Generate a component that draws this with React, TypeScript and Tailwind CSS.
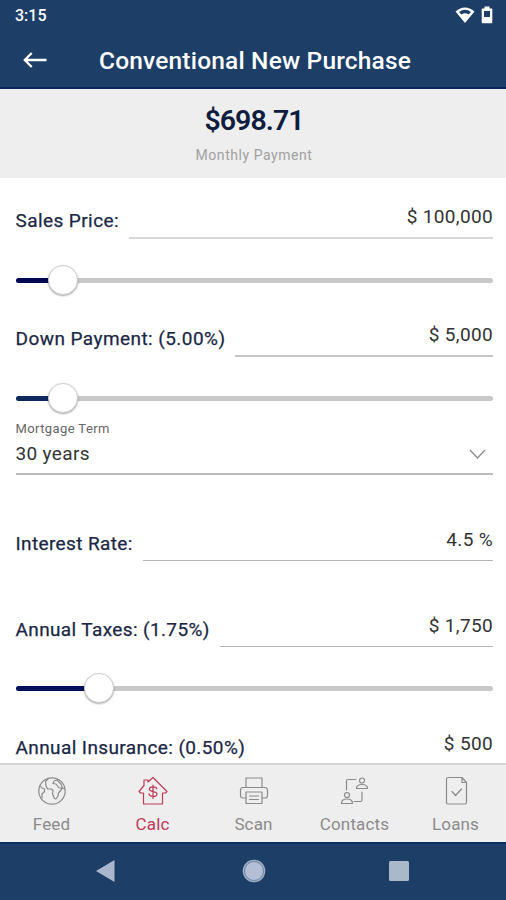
import type { ReactNode } from 'react';

function FieldRow({ label, value, line, spacing }: { label: string; value: string; line: string; spacing: string }) {
  return (
    <div className="flex h-11 items-end gap-[10px]">
      <span className={`shrink-0 text-[19px] leading-6 whitespace-nowrap text-[#1b2745] [-webkit-text-stroke:0.25px_#1b2745] ${spacing}`}>{label}</span>
      <div className={`flex-1 pb-2 text-right text-[19px] leading-6 tracking-[0.35px] text-[#333] ${line}`}>{value}</div>
    </div>
  );
}

function Slider({ fill, knob, color }: { fill: string; knob: string; color: string }) {
  return (
    <div className="relative flex h-[30px] items-center">
      <div className="h-[5px] w-full overflow-hidden rounded-full bg-[#c8c8c8]">
        <div className={`h-full ${fill} ${color}`} />
      </div>
      <div className={`absolute top-0 h-[30px] w-[30px] rounded-full border border-[#cfcfcf] bg-white shadow-[0_1px_2px_rgba(0,0,0,0.35)] ${knob}`} />
    </div>
  );
}

function Tab({ label, active = false, children }: { label: string; active?: boolean; children: ReactNode }) {
  return (
    <div className={`flex w-[101.2px] flex-col items-center pt-[11px] ${active ? 'text-[#c03a58]' : 'text-[#8b8b8b]'}`}>
      <svg width="30" height="30" viewBox="0 0 30 30" fill="none" stroke="currentColor" strokeWidth="1.2" strokeLinejoin="round" strokeLinecap="round">
        {children}
      </svg>
      <span className="mt-[8px] text-[17px] leading-5 tracking-[0.15px]">{label}</span>
    </div>
  );
}

export default function App() {
  return (
    <div className="flex h-[900px] w-[506px] flex-col overflow-hidden bg-white font-['Roboto',sans-serif]">
      <header className="h-[89px] shrink-0 border-b-2 border-[#0a2560] bg-[#1d3e66] text-white">
        <div className="flex h-8 items-center justify-between pr-[13px] pl-[15px]">
          <span className="text-[16px] font-medium">3:15</span>
          <div className="flex items-center gap-[6px] pb-[2px]">
            <svg width="20" height="18" viewBox="0 0 20 18">
              <path d="M.5 5.500Q10-2.500 19.500 5.500L10 17Z" fill="#fff" />
              <path d="M4 6Q10 1.500 16 6L13.500 8.500Q10 6 6.500 8.500Z" fill="#1d3e66" />
            </svg>
            <svg width="12" height="18" viewBox="0 0 12 18">
              <path d="M3.500 .5h5v2h2q.8 0 .8.800v13q0 1-.8 1h-9q-.8 0-.8-1v-13q0-.8.8-.8h2Z" fill="#fff" />
              <rect x="3" y="5" width="6" height="6" fill="#1d3e66" />
            </svg>
          </div>
        </div>
        <div className="flex h-14 items-center">
          <svg className="ml-[23px]" width="24" height="16" viewBox="0 0 24 16" fill="none" stroke="#fff" strokeWidth="2.300">
            <path d="M23.500 8H2M8.700 1L1.800 8l6.900 7" />
          </svg>
          <h1 className="ml-[52px] pt-[2px] text-[24.5px] font-medium tracking-[0.18px] whitespace-nowrap">Conventional New Purchase</h1>
        </div>
      </header>

      <section className="flex h-[89px] shrink-0 flex-col items-center bg-[#eee] pt-[15px]">
        <div className="pl-[2px] text-[28.5px] leading-[34px] font-semibold tracking-[-0.95px] text-[#101d3e]">$698.71</div>
        <div className="mt-[7px] pl-[2px] text-[14px] leading-5 tracking-[0.55px] text-[#a0a0a0]">Monthly Payment</div>
      </section>

      <main className="min-h-0 flex-1 overflow-hidden pt-[17px] pr-[13px] pl-[15.5px]">
        <FieldRow label="Sales Price:" value="$ 100,000" line="border-b-2 border-[#d8d8d8]" spacing="mb-[6px] tracking-[0.42px]" />
        <div className="mt-[26px]">
          <Slider fill="w-[48px]" knob="left-[32.5px]" color="bg-[#030650]" />
        </div>
        <div className="mt-[18px]">
          <FieldRow label="Down Payment: (5.00%)" value="$ 5,000" line="border-b-2 border-[#c6c6c6]" spacing="mb-[6px] tracking-[0.44px]" />
        </div>
        <div className="mt-[26px]">
          <Slider fill="w-[48px]" knob="left-[32.5px]" color="bg-[#0e2a5c]" />
        </div>
        <div className="mt-[8px] h-[54px] border-b-2 border-[#bdbdbd]">
          <div className="text-[13px] leading-4 tracking-[0.4px] text-[#666]">Mortgage Term</div>
          <div className="mt-[5px] flex items-center justify-between pr-[7px] text-[19px] leading-6 tracking-[0.35px] text-[#333]">
            <span>30 years</span>
            <svg width="17" height="10" viewBox="0 0 17 10" fill="none" stroke="#8c8c8c" strokeWidth="1.300">
              <path d="M1 1l7.500 8L16 1" />
            </svg>
          </div>
        </div>
        <div className="mt-[42px]">
          <FieldRow label="Interest Rate:" value="4.5 %" line="border-b border-[#b5b5b5]" spacing="mb-[5px] tracking-[0.38px]" />
        </div>
        <div className="mt-[42px]">
          <FieldRow label="Annual Taxes: (1.75%)" value="$ 1,750" line="border-b border-[#b5b5b5]" spacing="mb-[5px] tracking-[0.38px]" />
        </div>
        <div className="mt-[26px]">
          <Slider fill="w-[84px]" knob="left-[68.5px]" color="bg-[#04105a]" />
        </div>
        <div className="mt-[18px]">
          <FieldRow label="Annual Insurance: (0.50%)" value="$ 500" line="border-b border-[#b5b5b5]" spacing="mb-[5px] tracking-[0.4px]" />
        </div>
      </main>

      <nav className="flex h-[79px] shrink-0 border-t-2 border-[#d4d4d4] bg-[#eee] pl-[1px]">
        <Tab label="Feed">
          <circle cx="15" cy="15" r="13.2" />
          <path d="M11 3L8.500 5.500 9 10l1.500 3h4l1.500 1.500-.5 3.500 2 4.500 1.500.5 2-3 .5-3 3-3.500v-1.500h-2.500L19 8l-3-.5 1-2.500 3-1M20 4l4 4 1.500 4 2 1M3 9.500l2 2.500 2.500 1v2.500L5 18v4" />
        </Tab>
        <Tab label="Calc" active>
          <path d="M6 9.500V4h4v2L15 1.500 29 15.500 27.500 17H24.500V28H5.500V17H2.500L1 15.500Z" />
          <path d="M18.800 12.800c-.5-1.500-1.900-1.900-3.800-1.900s-3.600.6-3.600 2.300c0 3.300 7.600 1.500 7.600 4.700 0 1.900-2 2.500-4 2.500s-3.700-.6-4-2.500M15 9v13.500" />
        </Tab>
        <Tab label="Scan">
          <path d="M7 11V2h16v9M7 22H4q-2.500 0-2.500-2.500v-5Q1.500 11.500 4 11.500h22q2.500 0 2.500 3v5Q28.500 22 26 22h-3" />
          <path d="M7 16h16v11.500H7ZM10.500 20h9M10.500 23.500h9" />
        </Tab>
        <Tab label="Contacts">
          <path d="M6.500 14V5q0-1.500 1.500-1.500h8M14 25.500h6.500q1.500 0 1.500-1.500v-8" />
          <circle cx="22" cy="4.500" r="2.500" />
          <path d="M16.500 12.500c0-3 2.500-4 5.500-4s5.500 1 5.500 4Z" />
          <circle cx="7" cy="19" r="2.500" />
          <path d="M1.500 27.500c0-3.500 2.500-4.500 5.500-4.500s5.500 1 5.500 4.500Z" />
        </Tab>
        <Tab label="Loans">
          <path d="M5.500 3q0-1.500 1.500-1.500H21l4.500 5V26.500q0 1.500-1.500 1.500h-17Q5.500 28 5.500 26.500ZM21 1.500v5h4.500" />
          <path d="M11 15.500l3.500 4 6-6.500" />
        </Tab>
      </nav>

      <footer className="flex h-[58px] shrink-0 items-center border-t-2 border-[#0e2e60] bg-[#1d3e66] pb-[2px]">
        <svg className="ml-[96px]" width="19" height="22" viewBox="0 0 19 22">
          <path d="M18.500 0v22L0 11Z" fill="#a9b7cf" />
        </svg>
        <svg className="ml-[126.5px]" width="24" height="24" viewBox="0 0 24 24">
          <circle cx="12" cy="12" r="11.300" fill="#9eb0c9" />
          <circle cx="12" cy="12" r="9.500" fill="#b3bfd6" stroke="#627c9e" strokeWidth="0.9" />
        </svg>
        <div className="ml-[123.5px] h-5 w-5 rounded-[1.500px] bg-[#a9b9ca]" />
      </footer>
    </div>
  );
}
